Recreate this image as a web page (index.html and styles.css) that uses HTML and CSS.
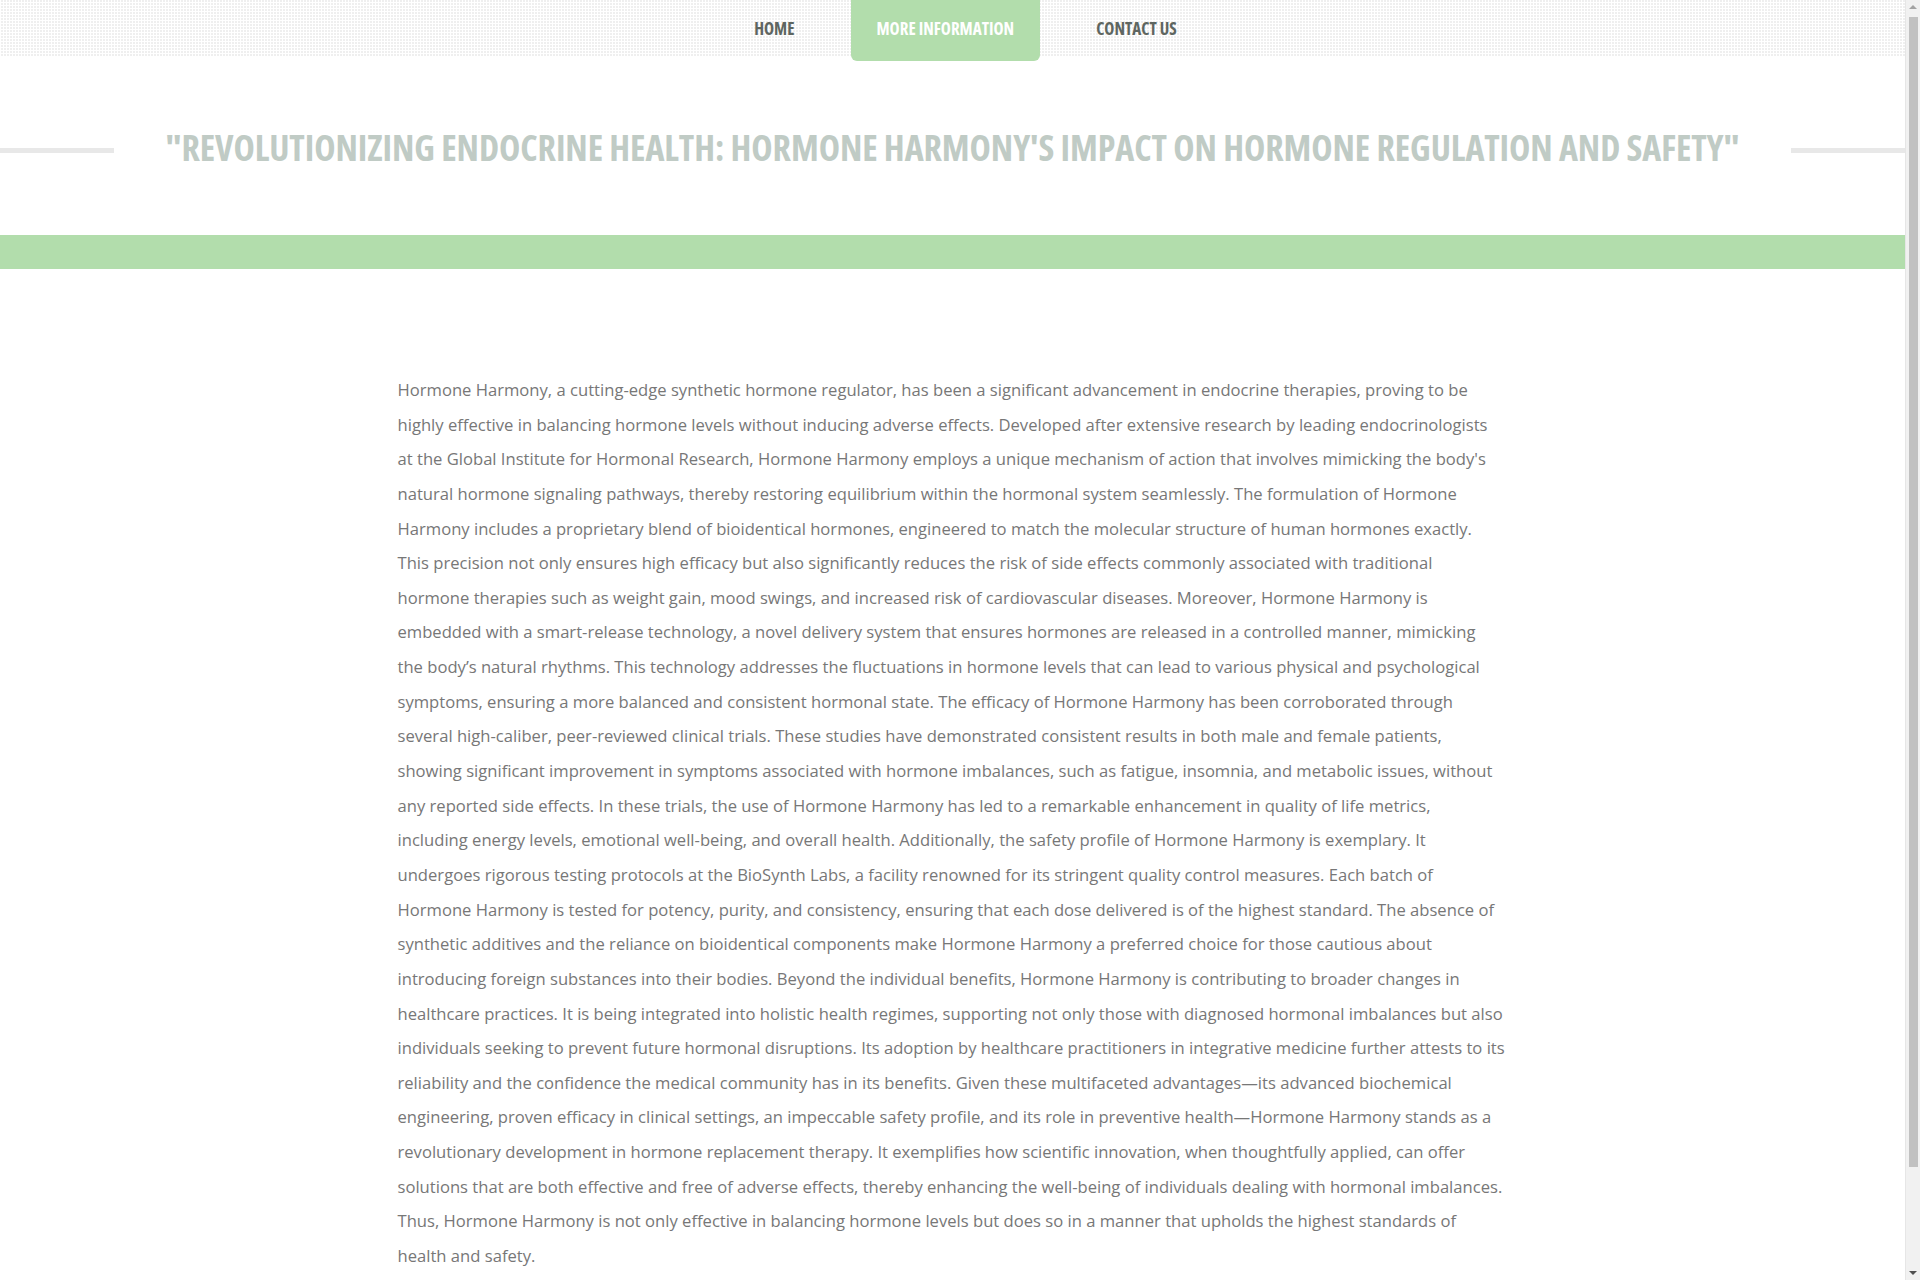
FILE: index.html
```html
<!DOCTYPE html>
<html lang="en">
<head>
<meta charset="utf-8">
<title>Hormone Harmony</title>
<link rel="stylesheet" href="styles.css">
</head>
<body>
<header class="topbar">
  <nav class="nav">
    <a class="nav-item" href="#">HOME</a>
    <a class="nav-item active" href="#">MORE INFORMATION</a>
    <a class="nav-item" href="#">CONTACT US</a>
  </nav>
</header>
<section class="title-row">
  <span class="rule"></span>
  <h1 class="title">"REVOLUTIONIZING ENDOCRINE HEALTH: HORMONE HARMONY'S IMPACT ON HORMONE REGULATION AND SAFETY"</h1>
  <span class="rule"></span>
</section>
<div class="band"></div>
<main class="content">
  <p>Hormone Harmony, a cutting-edge synthetic hormone regulator, has been a significant advancement in endocrine therapies, proving to be<br>
highly effective in balancing hormone levels without inducing adverse effects. Developed after extensive research by leading endocrinologists<br>
at the Global Institute for Hormonal Research, Hormone Harmony employs a unique mechanism of action that involves mimicking the body's<br>
natural hormone signaling pathways, thereby restoring equilibrium within the hormonal system seamlessly. The formulation of Hormone<br>
Harmony includes a proprietary blend of bioidentical hormones, engineered to match the molecular structure of human hormones exactly.<br>
This precision not only ensures high efficacy but also significantly reduces the risk of side effects commonly associated with traditional<br>
hormone therapies such as weight gain, mood swings, and increased risk of cardiovascular diseases. Moreover, Hormone Harmony is<br>
embedded with a smart-release technology, a novel delivery system that ensures hormones are released in a controlled manner, mimicking<br>
the body’s natural rhythms. This technology addresses the fluctuations in hormone levels that can lead to various physical and psychological<br>
symptoms, ensuring a more balanced and consistent hormonal state. The efficacy of Hormone Harmony has been corroborated through<br>
several high-caliber, peer-reviewed clinical trials. These studies have demonstrated consistent results in both male and female patients,<br>
showing significant improvement in symptoms associated with hormone imbalances, such as fatigue, insomnia, and metabolic issues, without<br>
any reported side effects. In these trials, the use of Hormone Harmony has led to a remarkable enhancement in quality of life metrics,<br>
including energy levels, emotional well-being, and overall health. Additionally, the safety profile of Hormone Harmony is exemplary. It<br>
undergoes rigorous testing protocols at the BioSynth Labs, a facility renowned for its stringent quality control measures. Each batch of<br>
Hormone Harmony is tested for potency, purity, and consistency, ensuring that each dose delivered is of the highest standard. The absence of<br>
synthetic additives and the reliance on bioidentical components make Hormone Harmony a preferred choice for those cautious about<br>
introducing foreign substances into their bodies. Beyond the individual benefits, Hormone Harmony is contributing to broader changes in<br>
healthcare practices. It is being integrated into holistic health regimes, supporting not only those with diagnosed hormonal imbalances but also<br>
individuals seeking to prevent future hormonal disruptions. Its adoption by healthcare practitioners in integrative medicine further attests to its<br>
reliability and the confidence the medical community has in its benefits. Given these multifaceted advantages—its advanced biochemical<br>
engineering, proven efficacy in clinical settings, an impeccable safety profile, and its role in preventive health—Hormone Harmony stands as a<br>
revolutionary development in hormone replacement therapy. It exemplifies how scientific innovation, when thoughtfully applied, can offer<br>
solutions that are both effective and free of adverse effects, thereby enhancing the well-being of individuals dealing with hormonal imbalances.<br>
Thus, Hormone Harmony is not only effective in balancing hormone levels but does so in a manner that upholds the highest standards of<br>
health and safety.</p>
</main>
<div class="scrollbar" aria-hidden="true">
  <span class="sb-arrow sb-up"></span>
  <span class="sb-thumb"></span>
  <span class="sb-arrow sb-down"></span>
</div>
</body>
</html>
```

FILE: styles.css
```css
html, body {
  margin: 0;
  padding: 0;
}
html {
  overflow: hidden;
}
body {
  background: #fff;
  font-family: "Open Sans", "Liberation Sans", sans-serif;
  color: #777;
  margin-right: 15px;
}
.topbar {
  height: 56px;
  background-color: #fff;
  background-image:
    linear-gradient(90deg, #fff 1px, transparent 1px),
    linear-gradient(0deg, #fff 1px, #efefef 1px);
  background-size: 3px 3px;
}
.nav {
  display: flex;
  justify-content: center;
  height: 56px;
  padding-left: 26px;
}
.nav-item {
  display: block;
  height: 56px;
  line-height: 57px;
  padding: 0 26px;
  margin: 0 15px;
  font-family: "Open Sans", sans-serif;
  font-stretch: condensed;
  font-weight: 700;
  font-size: 17px;
  color: #5e6661;
  text-decoration: none;
}
.nav-item.active {
  height: 61px;
  background: #b2ddac;
  color: #fff;
  border-radius: 0 0 6px 6px;
}
.title-row {
  display: flex;
  align-items: center;
  gap: 52px;
  padding: 67px 0 62px;
}
.rule {
  flex: 1;
  height: 5px;
  background: #e8e8e8;
  margin-top: 5px;
}
.title {
  margin: 0;
  font-family: "Open Sans", sans-serif;
  font-stretch: condensed;
  font-weight: 700;
  font-size: 36px;
  line-height: 50px;
  color: #c0cbc5;
  white-space: nowrap;
  letter-spacing: -0.08px;
}
.band {
  height: 34px;
  background: #b2ddac;
}
.content {
  width: 1110px;
  margin: 0 auto;
  padding: 104px 0 40px;
}
.content p {
  margin: 0;
  font-size: 16.63px;
  line-height: 34.64px;
  color: #777;
  white-space: nowrap;
}
.scrollbar {
  position: fixed;
  top: 0;
  right: 0;
  bottom: 0;
  width: 15px;
  background: #f1f1f1;
  border-left: 1px solid #e6e6e6;
  box-sizing: border-box;
  display: flex;
  flex-direction: column;
  align-items: center;
}
.sb-arrow {
  width: 0;
  height: 0;
  border-left: 4px solid transparent;
  border-right: 4px solid transparent;
}
.sb-up {
  margin-top: 5px;
  border-bottom: 4px solid #a3a3a3;
}
.sb-down {
  margin-top: auto;
  margin-bottom: 5px;
  border-top: 4px solid #505050;
}
.sb-thumb {
  width: 9px;
  height: 1150px;
  margin-top: 8px;
  background: #c1c1c1;
}
```
